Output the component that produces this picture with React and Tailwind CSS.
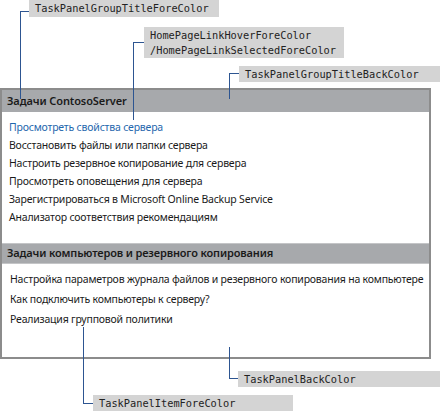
export default function App() {
    const groupOne = [
        'Восстановить файлы или папки сервера',
        'Настроить резервное копирование для сервера',
        'Просмотреть оповещения для сервера',
        'Зарегистрироваться в Microsoft Online Backup Service',
        'Анализатор соответствия рекомендациям',
    ];
    const groupTwo = [
        'Настройка параметров журнала файлов и резервного копирования на компьютере',
        'Как подключить компьютеры к серверу?',
        'Реализация групповой политики',
    ];

    return (
        <div className="relative w-[440px] h-[411px] bg-white overflow-hidden" style={{ fontFamily: '"Noto Sans", "Open Sans", sans-serif' }}>
            {/* task panel */}
            <div className="mt-[88px] w-[431px] h-[271px] border-2 border-[#8c8c8c] bg-white flex flex-col">
                <div className="h-[22px] bg-[#a7a9ac] pl-[5px] flex items-center text-[11px] font-semibold tracking-[-0.1px] text-[#1a1a1a]">
                    Задачи ContosoServer
                </div>
                <div className="pt-[6px] pl-[7px] text-[10.5px] tracking-[-0.2px] text-[#1a1a1a]">
                    <div className="leading-[18px] text-[#1f67ad]">Просмотреть свойства сервера</div>
                    {groupOne.map((t) => (
                        <div key={t} className="leading-[18px]">{t}</div>
                    ))}
                </div>
                <div className="mt-[17px] h-[21px] bg-[#a7a9ac] border-y border-[#c4c5c7] pl-[5px] flex items-center text-[11px] font-semibold tracking-[-0.15px] text-[#1a1a1a]">
                    Задачи компьютеров и резервного копирования
                </div>
                <div className="pt-[5px] pl-[8px] text-[10.5px] tracking-[-0.2px] text-[#1a1a1a]">
                    {groupTwo.map((t) => (
                        <div key={t} className="leading-[20px] whitespace-nowrap">{t}</div>
                    ))}
                </div>
            </div>

            {/* callouts */}
            <div className="absolute left-[20px] top-0 flex items-start">
                <div className="mt-[11px] w-[9px] h-[88px] border-l border-t border-[#2d5591]" />
                <Label className="w-[190px] h-[17px]" lines={['TaskPanelGroupTitleForeColor']} />
            </div>
            <div className="absolute left-[133px] top-[27px] flex items-start">
                <div className="mt-[15px] w-[11px] h-[78px] border-l border-t border-[#2d5591]" />
                <Label className="w-[200px] h-[31px]" lines={['HomePageLinkHoverForeColor', '/HomePageLinkSelectedForeColor']} />
            </div>
            <div className="absolute left-[229px] top-[66px] flex items-start">
                <div className="mt-[7px] w-[10px] h-[26px] border-l border-t border-[#2d5591]" />
                <Label className="w-[201px] h-[16px]" lines={['TaskPanelGroupTitleBackColor']} />
            </div>
            <div className="absolute left-[229px] top-[347px] flex items-start">
                <div className="w-[9px] h-[32px] border-l border-b border-[#2d5591]" />
                <Label className="mt-[24px] w-[202px] h-[16px]" lines={['TaskPanelBackColor']} />
            </div>
            <div className="absolute left-[83px] top-[327px] flex items-start">
                <div className="w-[10px] h-[77px] border-l border-b border-[#2d5591]" />
                <Label className="mt-[68px] w-[200px] h-[16px]" lines={['TaskPanelItemForeColor']} />
            </div>
        </div>
    );
}

function Label({ className, lines }) {
    return (
        <div
            className={`${className} bg-[#d4d4d4] pl-[6px] flex flex-col justify-center text-[10.3px] leading-[15px] text-[#222]`}
            style={{ fontFamily: '"DejaVu Sans Mono", "Liberation Mono", monospace' }}
        >
            {lines.map((l) => (
                <div key={l}>{l}</div>
            ))}
        </div>
    );
}
